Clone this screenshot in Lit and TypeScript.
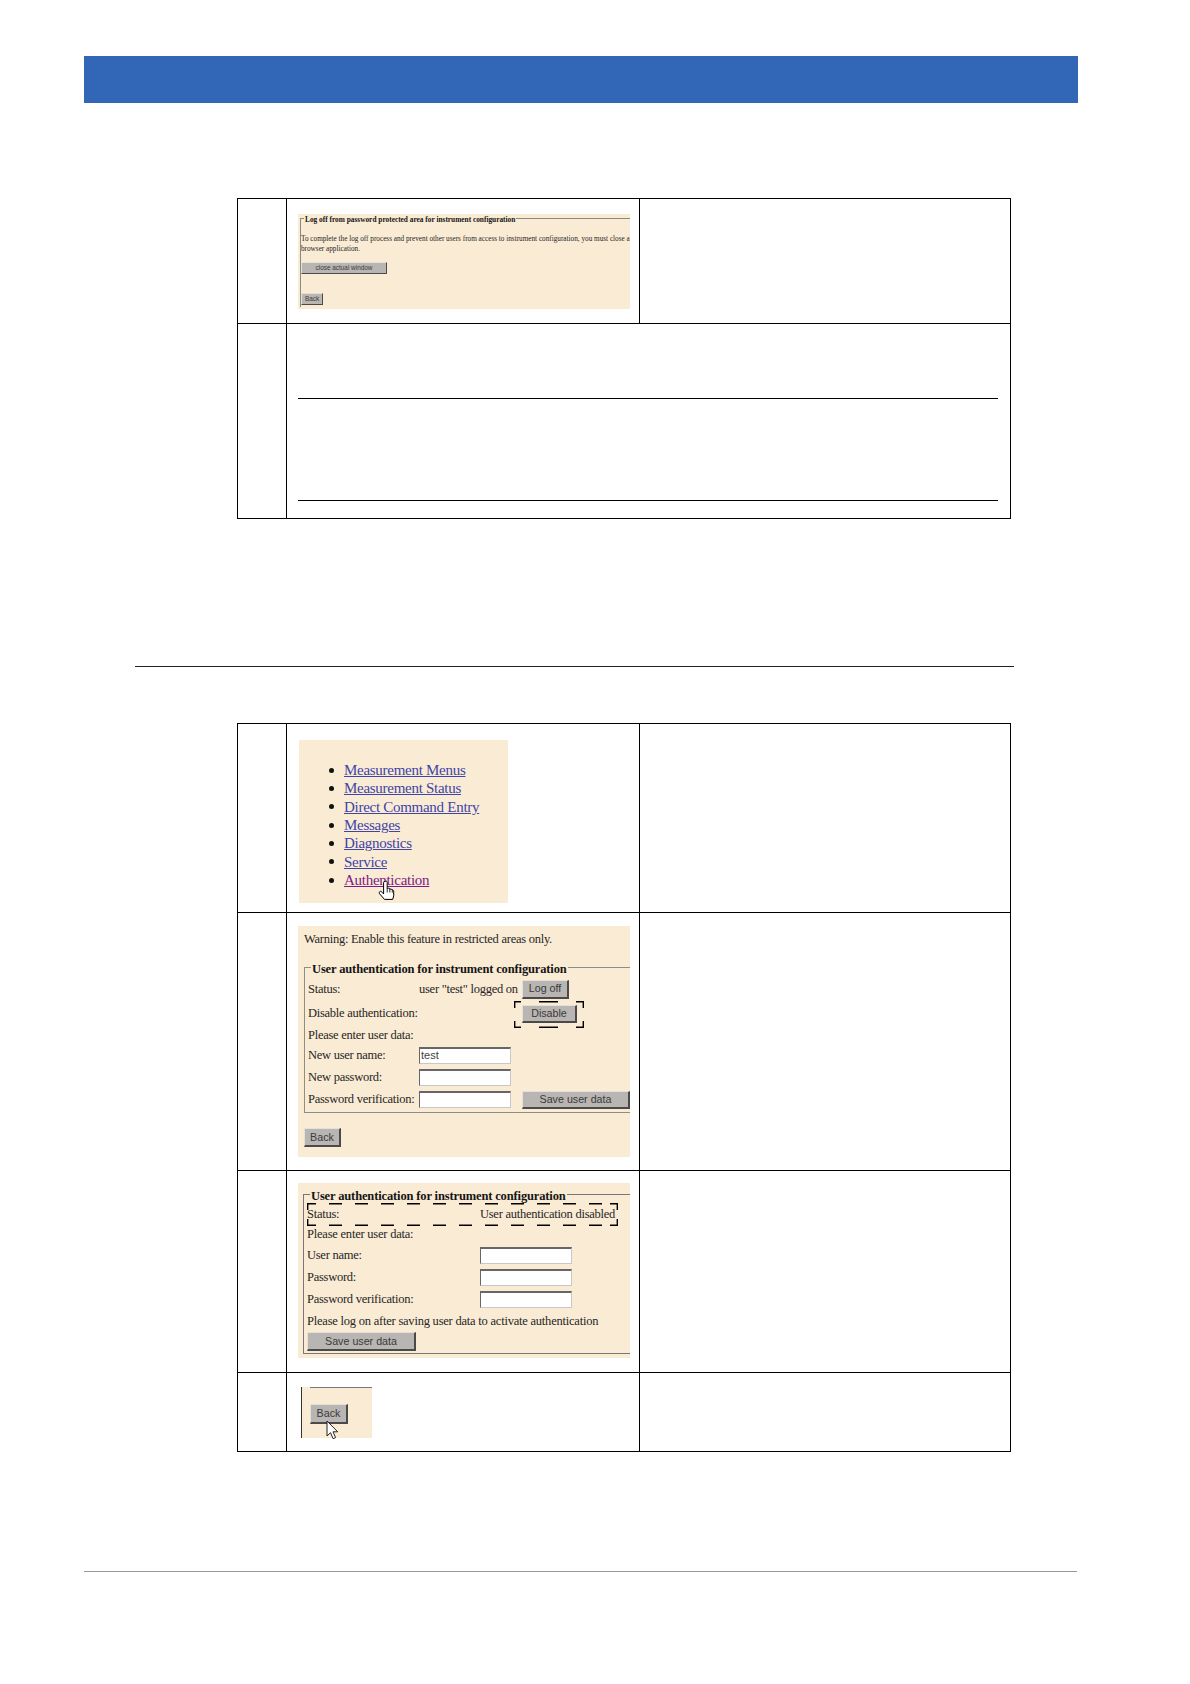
import { LitElement, html, css, svg } from "lit";
import { customElement } from "lit/decorators.js";

const hand = svg`<path d="M7 1.500c1-.8 2.200-.2 2.200 1v6.200l.6-.2c.8-.6 1.800-.3 2 .5l.2.3c.7-.5 1.800-.2 2 .7.8-.3 1.700.2 1.700 1.200v4.600l-1 3.600H6.500L1.800 14c-.8-1-.7-2 .1-2.500.7-.4 1.400-.1 2.100.7l1.600 1.700V2.700c0-.5.1-.9.400-1.200z" fill="#fff" stroke="#000" stroke-width="1" stroke-linejoin="round"/><path d="M9.200 8.500v4M11.800 8.800v3.700M14.300 9.700v3" fill="none" stroke="#000" stroke-width=".8"/>`;
const arrow = svg`<path d="M1 1v15l3.500-3.300 2.600 6 2.500-1.100-2.600-5.800h4.700z" fill="#fff" stroke="#222" stroke-width="1" stroke-linejoin="miter"/>`;

@customElement("app-root")
export class AppRoot extends LitElement {
  static styles = css`
    :host { display: block; background: #fff; font-family: "Liberation Serif", "Times New Roman", serif; color: #262626; }
    * { box-sizing: border-box; }
    .page { height: 1684px; padding-top: 56px; overflow: hidden; }
    .banner { width: 994px; height: 47px; margin-left: 84px; background: #3167b6; }
    .table { display: grid; grid-template-columns: 49px 353px 371px; width: 774px; margin-left: 237px; border-top: 1px solid #000; border-left: 1px solid #000; }
    .t1 { margin-top: 95px; grid-template-rows: 125px 195px; }
    .t2 { margin-top: 56px; grid-template-rows: 189px 258px 202px 79px; }
    .cell { border-right: 1px solid #000; border-bottom: 1px solid #000; min-width: 0; }
    .shot-cell { padding-left: 11px; position: relative; }
    .wide { grid-column: 2 / 4; padding: 74px 12px 0 11px; }
    .wide .rule { height: 1px; background: #000; }
    .wide .rule + .rule { margin-top: 101px; }
    .hr { width: 879px; height: 1px; margin: 147px 0 0 135px; background: #222; }
    .footer { width: 993px; height: 1px; margin: 119px 0 0 84px; background: #999; }

    .shot { background: #faebd4; position: relative; font-size: 12.500px; letter-spacing: -0.26px; line-height: 15px; overflow: hidden; }
    fieldset { margin: 0; padding: 0; border: 0; min-width: 0; }
    legend { font-weight: 700; padding: 4px 1px 0; margin-left: 6px; font-size: 12.500px; letter-spacing: -0.14px; line-height: 15px; white-space: nowrap; color: #151515; }
    .btn { font-family: "Liberation Sans", Arial, sans-serif; font-size: 10.700px; letter-spacing: 0; color: #3a3a3a; background: #b8b5b2; display: flex; align-items: center; justify-content: center; border-style: solid; border-width: 1px 2px 2px 1px; border-color: #e4e0da #4a4a4a #4a4a4a #e4e0da; white-space: nowrap; }
    .input { background: #fff; height: 17px; width: 92px; border-style: solid; border-width: 2px 1px 1px 1px; border-color: #666 #c8c8c8 #c8c8c8 #666; font: 11px/13px "Liberation Sans", Arial, sans-serif; letter-spacing: 0; color: #444; padding-left: 1px; }

    /* log off shot */
    .s1 { width: 332px; height: 95px; margin-top: 15px; padding: 0 0 0 2px; font-size: 7.220px; letter-spacing: 0; line-height: 10px; }
    .s1 fieldset { height: 100%; margin-top: -2px; border-left: 1px solid #8a8a80; border-top: 1px solid #8a8a80; }
    .s1 legend { font-size: 7.350px; letter-spacing: 0; line-height: 10px; margin-left: 3px; padding: 3px 1px 0; }
    .s1 p { margin: 9px 0 0; white-space: nowrap; }
    .s1 .btn { font-size: 6.400px; border-width: 1px; height: 12px; }
    .s1 .b1 { width: 86px; margin-top: 8px; }
    .s1 .b2 { width: 22px; margin-top: 19px; }

    /* menu shot */
    .s2 { width: 209px; height: 163px; margin: 16px 0 0 1px; overflow: visible; font-size: 15px; letter-spacing: -0.28px; }
    .s2 ul { margin: 0; padding: 21px 0 0 45px; line-height: 18.350px; list-style: none; }
    .s2 li { display: flex; align-items: center; }
    .s2 li::before { content: ""; width: 5px; height: 5px; margin: 0 10px 0 -15px; border-radius: 50%; background: #111; flex: none; }
    .s2 a { color: #3e44a8; text-decoration: underline; }
    .s2 a.v { color: #7d1a86; }
    .hand { position: absolute; left: 79px; top: 140px; width: 17px; height: 22px; }

    /* enable shot */
    .s3 { width: 332px; height: 231px; margin-top: 13px; padding: 6px 0 0 6px; }
    .s3 .warn { height: 26px; }
    .auth { border: 1px solid #8e8e86; border-right: 0; }
    .s3 .auth { height: 155px; }
    .form { display: grid; align-items: center; }
    .form > div { white-space: nowrap; }
    .s3 .form { grid-template-columns: 111px 103px 1fr; grid-template-rows: 20px 28px 17px 22px 22px 22px; padding: 2px 0 0 3px; }
    .s3 .log { width: 47px; height: 19px; }
    .s3 .dis { grid-column: 3; width: 55px; height: 18px; margin-top: 1px; }
    .s3 .save { width: 108px; height: 18px; margin-top: 1px; }
    .s3 .full { grid-column: 1 / 4; }
    .s3 .back { width: 37px; height: 19px; margin-top: 15px; }
    .dash { position: absolute; overflow: visible; fill: none; stroke: #000; stroke-width: 1.400; }
    .d1 { left: 216px; top: 75px; width: 70px; height: 27px; }

    /* disabled shot */
    .s4 { width: 332px; height: 175px; margin-top: 12px; padding: 2px 0 0 5px; }
    .s4 .auth { height: 169px; border-color: #777; }
    .s4 .form { grid-template-columns: 173px 1fr; grid-template-rows: 20px 20px 22px 22px 22px 22px 21px; padding: 0 0 0 3px; }
    .s4 .form .span { grid-column: 1 / 3; letter-spacing: -0.22px; }
    .s4 .save { width: 109px; height: 19px; align-self: start; }
    .d2 { left: 9px; top: 20px; width: 311px; height: 23px; }

    /* back shot */
    .s5 { width: 71px; height: 51px; margin: 14px 0 0 3px; overflow: visible; padding: 17px 0 0 9px; }
    .s5 .edge { position: absolute; left: 0; top: 0; bottom: 0; width: 1px; background: #333; }
    .s5 .top { position: absolute; left: 9px; right: 0; top: 0; height: 1px; background: #777; }
    .s5 .btn { width: 38px; height: 20px; }
    .arrow { position: absolute; left: 25px; top: 33px; width: 12px; height: 19px; }
  `;

  render() {
    const links = ["Measurement Menus", "Measurement Status", "Direct Command Entry", "Messages", "Diagnostics", "Service"];
    return html`<div class="page">
      <div class="banner"></div>

      <div class="table t1">
        <div class="cell"></div>
        <div class="cell shot-cell">
          <div class="shot s1">
            <fieldset>
              <legend>Log off from password protected area for instrument configuration</legend>
              <p>To complete the log off process and prevent other users from access to instrument configuration, you must close all<br>browser application.</p>
              <div class="btn b1">close actual window</div>
              <div class="btn b2">Back</div>
            </fieldset>
          </div>
        </div>
        <div class="cell"></div>
        <div class="cell"></div>
        <div class="cell wide"><div class="rule"></div><div class="rule"></div></div>
      </div>

      <div class="hr"></div>

      <div class="table t2">
        <div class="cell"></div>
        <div class="cell shot-cell">
          <div class="shot s2">
            <ul>
              ${links.map((l) => html`<li><a>${l}</a></li>`)}
              <li><a class="v">Authentication</a></li>
            </ul>
            <svg class="hand" viewBox="0 0 17 22">${hand}</svg>
          </div>
        </div>
        <div class="cell"></div>

        <div class="cell"></div>
        <div class="cell shot-cell">
          <div class="shot s3">
            <div class="warn">Warning: Enable this feature in restricted areas only.</div>
            <fieldset class="auth">
              <legend>User authentication for instrument configuration</legend>
              <div class="form">
                <div>Status:</div>
                <div>user "test" logged on</div><div class="btn log">Log off</div>
                <div>Disable authentication:</div>
                <div class="btn dis">Disable</div>
                <div class="full">Please enter user data:</div>
                <div>New user name:</div><div class="input">test</div><div></div>
                <div>New password:</div><div class="input"></div><div></div>
                <div>Password verification:</div><div class="input"></div><div class="btn save">Save user data</div>
              </div>
            </fieldset>
            <div class="btn back">Back</div>
            <svg class="dash d1" viewBox="0 0 70 27"><path d="M7 .7H.7V7M25 .7h19M62 .7h7.300V7M.7 20v6.300H7M25 26.300h19M62 26.300h7.300V20"/></svg>
          </div>
        </div>
        <div class="cell"></div>

        <div class="cell"></div>
        <div class="cell shot-cell">
          <div class="shot s4">
            <fieldset class="auth">
              <legend>User authentication for instrument configuration</legend>
              <div class="form">
                <div>Status:</div><div>User authentication disabled</div>
                <div class="span">Please enter user data:</div>
                <div>User name:</div><div class="input"></div>
                <div>Password:</div><div class="input"></div>
                <div>Password verification:</div><div class="input"></div>
                <div class="span">Please log on after saving user data to activate authentication</div>
                <div class="btn save">Save user data</div>
              </div>
            </fieldset>
            <svg class="dash d2" viewBox="0 0 311 23"><path d="M.7 7V.7H9M22 .7h13M48 .7h13M74 .7h13M100 .7h13M126 .7h13M152 .7h13M178 .7h13M204 .7h13M230 .7h13M256 .7h13M282 .7h13M303 .7h7.300V7M.7 16v6.300H9M22 22.300h13M48 22.300h13M74 22.300h13M100 22.300h13M126 22.300h13M152 22.300h13M178 22.300h13M204 22.300h13M230 22.300h13M256 22.300h13M282 22.300h13M303 22.300h7.300V16"/></svg>
          </div>
        </div>
        <div class="cell"></div>

        <div class="cell"></div>
        <div class="cell shot-cell">
          <div class="shot s5">
            <div class="edge"></div><div class="top"></div>
            <div class="btn">Back</div>
            <svg class="arrow" viewBox="0 0 12 19">${arrow}</svg>
          </div>
        </div>
        <div class="cell"></div>
      </div>

      <div class="footer"></div>
    </div>`;
  }
}
